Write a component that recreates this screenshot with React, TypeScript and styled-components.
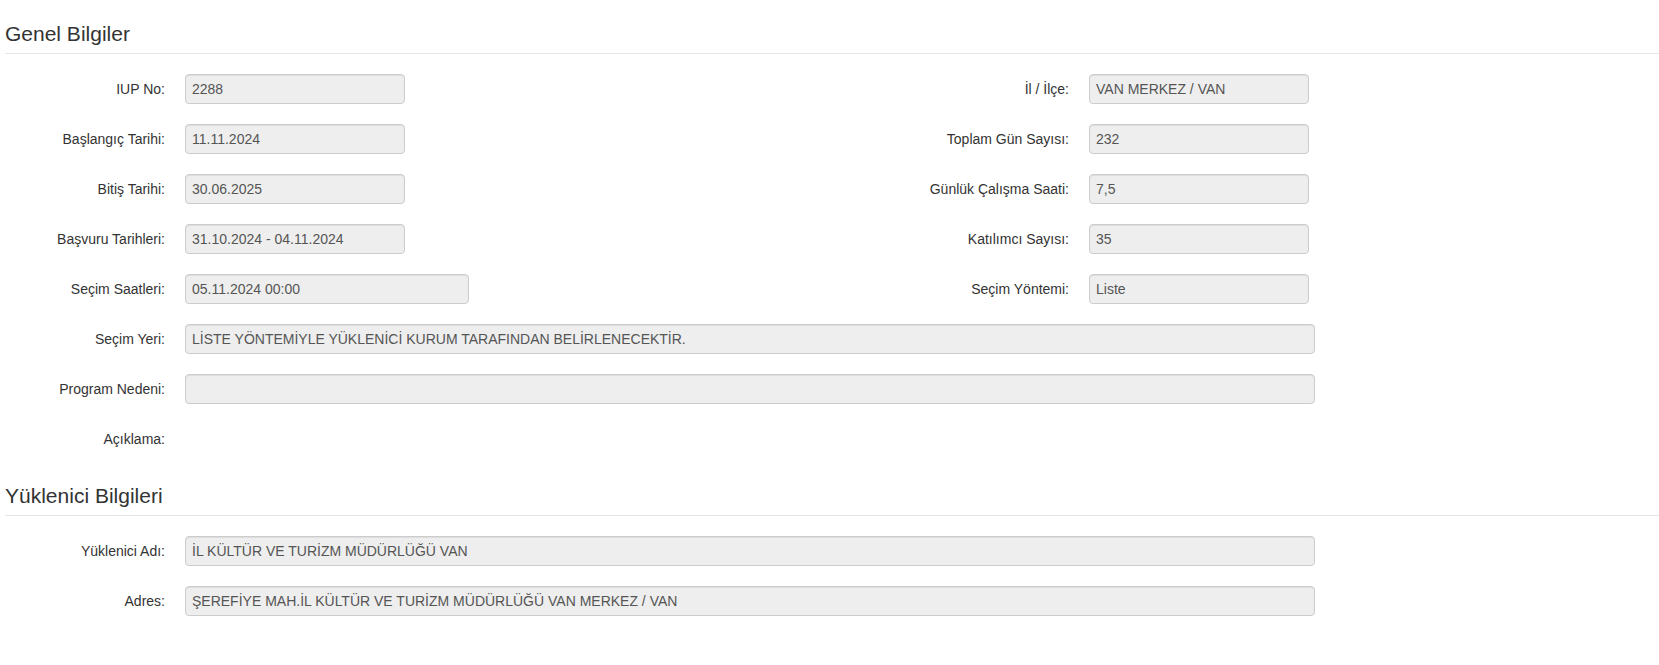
import React from "react";
import styled, { createGlobalStyle } from "styled-components";

const GlobalStyle = createGlobalStyle`
  html, body {
    margin: 0;
    padding: 0;
    background: #ffffff;
  }
  body {
    font-family: "Liberation Sans", Arial, sans-serif;
    font-size: 14px;
    color: #333333;
  }
`;

const Page = styled.div`
  padding: 0 0 40px 5px;
  box-sizing: border-box;
  width: 100%;
`;

const Section = styled.section<{ $top: number }>`
  margin-top: ${(p) => p.$top}px;
`;

const SectionTitle = styled.h4`
  margin: 0 0 20px 0;
  padding: 0 0 8px 0;
  font-size: 21px;
  line-height: 23px;
  font-weight: 400;
  color: #333333;
  border-bottom: 1px solid #e5e5e5;
`;

const Rows = styled.div`
  display: flex;
  flex-direction: column;
  gap: 20px;
`;

const Row = styled.div`
  display: grid;
  grid-template-columns: 904px 1fr;
  align-items: center;
  min-height: 30px;
`;

const Field = styled.div`
  display: grid;
  grid-template-columns: 160px auto;
  column-gap: 20px;
  align-items: center;
  min-height: 30px;
`;

const Label = styled.label`
  text-align: right;
  font-size: 14px;
  color: #333333;
  white-space: nowrap;
`;

const widths = { sm: 220, md: 284, full: 1130 } as const;

const Input = styled.div<{ $w: keyof typeof widths }>`
  box-sizing: border-box;
  width: ${(p) => widths[p.$w]}px;
  height: 30px;
  padding: 0 6px;
  display: flex;
  align-items: center;
  background: #eeeeee;
  border: 1px solid #cccccc;
  border-radius: 4px;
  box-shadow: inset 0 1px 1px rgba(0, 0, 0, 0.075);
  font-size: 14px;
  color: #555555;
  white-space: nowrap;
  overflow: hidden;
`;

type F = { label: string; value?: string; w?: keyof typeof widths; noInput?: boolean };

const FieldItem = ({ label, value = "", w = "sm", noInput }: F) => (
  <Field>
    <Label>{label}</Label>
    {noInput ? <span /> : <Input $w={w}>{value}</Input>}
  </Field>
);

const pairs: [F, F][] = [
  [{ label: "IUP No:", value: "2288" }, { label: "İl / İlçe:", value: "VAN MERKEZ / VAN" }],
  [{ label: "Başlangıç Tarihi:", value: "11.11.2024" }, { label: "Toplam Gün Sayısı:", value: "232" }],
  [{ label: "Bitiş Tarihi:", value: "30.06.2025" }, { label: "Günlük Çalışma Saati:", value: "7,5" }],
  [{ label: "Başvuru Tarihleri:", value: "31.10.2024 - 04.11.2024" }, { label: "Katılımcı Sayısı:", value: "35" }],
  [{ label: "Seçim Saatleri:", value: "05.11.2024 00:00", w: "md" }, { label: "Seçim Yöntemi:", value: "Liste" }],
];

const singles: F[] = [
  { label: "Seçim Yeri:", value: "LİSTE YÖNTEMİYLE YÜKLENİCİ KURUM TARAFINDAN BELİRLENECEKTİR.", w: "full" },
  { label: "Program Nedeni:", value: "", w: "full" },
  { label: "Açıklama:", noInput: true },
];

const contractor: F[] = [
  { label: "Yüklenici Adı:", value: "İL KÜLTÜR VE TURİZM MÜDÜRLÜĞÜ VAN", w: "full" },
  { label: "Adres:", value: "ŞEREFİYE MAH.İL KÜLTÜR VE TURİZM MÜDÜRLÜĞÜ VAN MERKEZ / VAN", w: "full" },
];

export default function App() {
  return (
    <>
      <GlobalStyle />
      <Page>
        <Section $top={22}>
          <SectionTitle>Genel Bilgiler</SectionTitle>
          <Rows>
            {pairs.map(([a, b]) => (
              <Row key={a.label}>
                <FieldItem {...a} />
                <FieldItem {...b} />
              </Row>
            ))}
            {singles.map((f) => (
              <Row key={f.label}>
                <FieldItem {...f} />
              </Row>
            ))}
          </Rows>
        </Section>
        <Section $top={30}>
          <SectionTitle>Yüklenici Bilgileri</SectionTitle>
          <Rows>
            {contractor.map((f) => (
              <Row key={f.label}>
                <FieldItem {...f} />
              </Row>
            ))}
          </Rows>
        </Section>
      </Page>
    </>
  );
}
